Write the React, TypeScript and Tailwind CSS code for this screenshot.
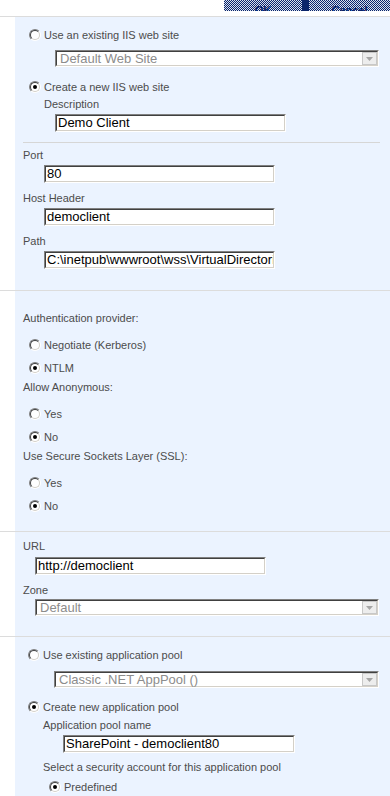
import type { ReactNode } from "react";

const Radio = ({ checked }: { checked?: boolean }) => (
  <span className="flex h-[12px] w-[12px] shrink-0 rounded-full border border-t-[#808080] border-l-[#808080] border-r-white border-b-white">
    <span className="flex h-full w-full items-center justify-center rounded-full border border-t-[#404040] border-l-[#404040] border-r-[#d4d0c8] border-b-[#d4d0c8] bg-white">
      {checked && <span className="h-[4px] w-[4px] rounded-full bg-black" />}
    </span>
  </span>
);

const RadioRow = ({ checked, label, className }: { checked?: boolean; label: string; className: string }) => (
  <div className={`flex h-[20px] items-center gap-[3px] ${className}`}>
    <Radio checked={checked} />
    <span>{label}</span>
  </div>
);

const Label = ({ children, className }: { children: ReactNode; className: string }) => (
  <div className={`flex h-[14px] items-center whitespace-nowrap ${className}`}>{children}</div>
);

const TextBox = ({ value, className }: { value: string; className: string }) => (
  <div className={`h-[18px] border border-t-[#808080] border-l-[#808080] border-r-white border-b-white ${className}`}>
    <div className="flex h-full items-center overflow-hidden whitespace-nowrap border border-t-[#404040] border-l-[#404040] border-r-[#d4d0c8] border-b-[#d4d0c8] bg-white px-[1px] text-[13px] text-black">
      {value}
    </div>
  </div>
);

const DisabledSelect = ({ value, className }: { value: string; className: string }) => (
  <div className={`h-[17px] border border-t-[#808080] border-l-[#808080] border-r-white border-b-white ${className}`}>
    <div className="flex h-full items-center border border-t-[#404040] border-l-[#404040] border-r-[#d4d0c8] border-b-[#d4d0c8] bg-white">
      <span className="flex-1 overflow-hidden whitespace-nowrap pl-[3px] text-[13px] text-[#8c8c8c]">{value}</span>
      <span className="flex h-full w-[15px] items-center justify-center border border-[#c8c8c8] bg-[#ededed]">
        <svg width="7" height="4" viewBox="0 0 7 4">
          <path d="M0 0h7L3.5 4z" fill="#a5a5a5" />
        </svg>
      </span>
    </div>
  </div>
);

const Section = ({ children, className }: { children: ReactNode; className?: string }) => (
  <div className={`flex border-b border-[#dcdcdc] ${className ?? ""}`}>
    <div className="w-[15px] shrink-0 bg-white" />
    <div className="flex flex-1 flex-col bg-[#ebf3ff]">{children}</div>
  </div>
);

export default function App() {
  return (
    <div className="min-h-screen w-[390px] overflow-hidden bg-white font-['Liberation_Sans',Arial,sans-serif] text-[11px] text-[#4c4c4c]">
      <div className="flex h-[16px] justify-end">
        <div className="flex h-[11px] w-[78px] items-end justify-center overflow-hidden bg-[repeating-conic-gradient(#0a246a_0%_25%,#d9e0ee_0%_50%)] bg-[length:2px_2px]">
          <span className="-mb-[7px] text-[11px] font-bold text-[#0a246a]">OK</span>
        </div>
        <div className="h-[11px] w-[7px] bg-[#0a246a]" />
        <div className="flex h-[11px] w-[81px] items-end justify-center overflow-hidden bg-[repeating-conic-gradient(#0a246a_0%_25%,#d9e0ee_0%_50%)] bg-[length:2px_2px]">
          <span className="-mb-[7px] text-[11px] font-bold text-[#0a246a]">Cancel</span>
        </div>
      </div>

      <Section className="border-t">
        <RadioRow label="Use an existing IIS web site" className="ml-[14px] mt-[8px]" />
        <DisabledSelect value="Default Web Site" className="ml-[40px] mr-[11px] mt-[5px]" />
        <RadioRow checked label="Create a new IIS web site" className="ml-[14px] mt-[10px]" />
        <Label className="ml-[29px]">Description</Label>
        <TextBox value="Demo Client" className="ml-[40px] mt-[3px] w-[231px]" />
        <div className="ml-[8px] mr-[10px] mt-[10px] h-px bg-[#d6d6d6]" />
        <Label className="ml-[8px] mt-[5px]">Port</Label>
        <TextBox value="80" className="ml-[29px] mt-[3px] w-[231px]" />
        <Label className="ml-[8px] mt-[8px]">Host Header</Label>
        <TextBox value="democlient" className="ml-[29px] mt-[3px] w-[231px]" />
        <Label className="ml-[8px] mt-[8px]">Path</Label>
        <TextBox value="C:\inetpub\wwwroot\wss\VirtualDirectories\democlient80" className="ml-[29px] mt-[3px] w-[231px]" />
        <div className="h-[21px]" />
      </Section>

      <Section>
        <Label className="ml-[8px] mt-[20px]">Authentication provider:</Label>
        <RadioRow label="Negotiate (Kerberos)" className="ml-[14px] mt-[10px]" />
        <RadioRow checked label="NTLM" className="ml-[14px] mt-[3px]" />
        <Label className="ml-[8px] mt-[2px]">Allow Anonymous:</Label>
        <RadioRow label="Yes" className="ml-[14px] mt-[10px]" />
        <RadioRow checked label="No" className="ml-[14px] mt-[3px]" />
        <Label className="ml-[8px] mt-[2px]">Use Secure Sockets Layer (SSL):</Label>
        <RadioRow label="Yes" className="ml-[14px] mt-[10px]" />
        <RadioRow checked label="No" className="ml-[14px] mt-[3px]" />
        <div className="h-[15px]" />
      </Section>

      <Section>
        <Label className="ml-[8px] mt-[7px]">URL</Label>
        <TextBox value="http://democlient" className="ml-[20px] mt-[4px] w-[231px]" />
        <Label className="ml-[8px] mt-[8px]">Zone</Label>
        <DisabledSelect value="Default" className="ml-[20px] mr-[11px] mt-[2px]" />
        <div className="h-[20px]" />
      </Section>

      <Section>
        <RadioRow label="Use existing application pool" className="ml-[13px] mt-[8px]" />
        <DisabledSelect value="Classic .NET AppPool ()" className="ml-[39px] mr-[11px] mt-[6px]" />
        <RadioRow checked label="Create new application pool" className="ml-[13px] mt-[9px]" />
        <Label className="ml-[28px] mt-[1px]">Application pool name</Label>
        <TextBox value="SharePoint - democlient80" className="ml-[48px] mt-[3px] w-[232px]" />
        <Label className="ml-[28px] mt-[7px]">Select a security account for this application pool</Label>
        <RadioRow checked label="Predefined" className="ml-[34px] mt-[3px]" />
        <div className="h-[20px]" />
      </Section>
    </div>
  );
}
